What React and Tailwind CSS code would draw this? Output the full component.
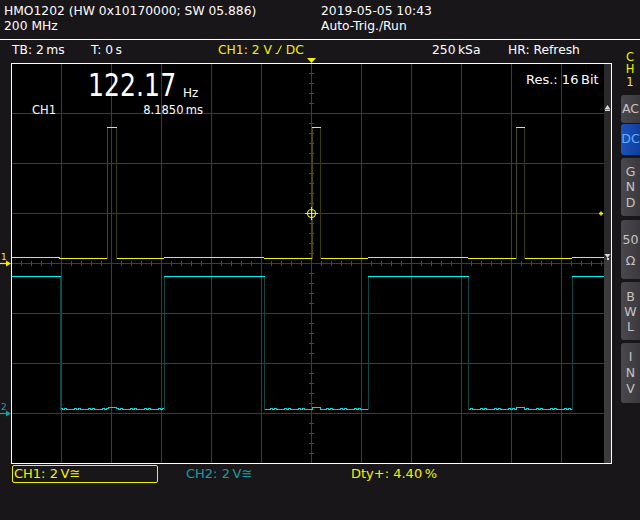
import React from "react";

const YEL = "#f2f200";
const GRID = "#3c3c3c";
const TICK = "#4a4a4a";

function lowPath(a, b, p0, p1) {
  let d = `M${a} 346.5`;
  for (let x = a; x < b; x += 2) {
    let y = 346.5;
    if (x >= p0 && x < p1) y = 344.5;
    else if ((x * 37) % 7 < 2) y = 345.5;
    d += ` L${x} ${y} L${x + 2} ${y}`;
  }
  return d;
}

function Screen() {
  const v = [];
  for (let k = 1; k < 12; k++)
    v.push(<line key={"v" + k} x1={50 * k + 0.5} y1={0} x2={50 * k + 0.5} y2={401} stroke={GRID} />);
  const h = [];
  for (let k = 1; k < 8; k++)
    h.push(<line key={"h" + k} x1={0} y1={50 * k + 0.5} x2={601} y2={50 * k + 0.5} stroke={GRID} />);
  const ticks = [];
  for (let k = 1; k < 40; k++)
    if (k % 5)
      ticks.push(<line key={"tv" + k} x1={298} x2={303} y1={10 * k + 0.5} y2={10 * k + 0.5} stroke={TICK} />);
  for (let k = 1; k < 60; k++)
    if (k % 5)
      ticks.push(<line key={"th" + k} y1={198} y2={203} x1={10 * k + 0.5} x2={10 * k + 0.5} stroke={TICK} />);

  const pulses = [[96, 105], [301, 309], [505, 513]];
  const lows = [[49, 153, 96, 105], [253, 357, 301, 309], [457, 561, 505, 513]];

  const yellow =
    "M1 194.5 H48.5 M48 195.5 H96 M105 195.5 H153 M153 194.5 H253 M253 195.5 H301 M309 195.5 H357 M357 194.5 H457 M457 195.5 H505 M513 195.5 H561 M561 194.5 H593";

  return (
    <svg width="601" height="401" viewBox="0 0 601 401" className="block" shapeRendering="crispEdges">
      <rect x="0" y="0" width="601" height="401" fill="#000" />
      {v}
      {h}
      {ticks}
      {/* CH2 trace */}
      <path d="M1 213.5 H49.5 M153 213.5 H253.5 M357 213.5 H457.5 M561 213.5 H593" stroke="#00f0f0" fill="none" />
      {lows.map(([a, b, p0, p1], i) => (
        <path key={"l" + i} d={lowPath(a, b, p0, p1)} stroke="#00d8d8" fill="none" />
      ))}
      {[49, 153, 253, 357, 457, 561].map((x) => (
        <line key={"ce" + x} x1={x + 0.5} x2={x + 0.5} y1={213.5} y2={346.5} stroke="#0b4848" />
      ))}
      {/* CH1 trace */}
      <path d={yellow} stroke="#f0f000" fill="none" />
      {pulses.map(([a, b], i) => (
        <g key={"p" + i}>
          <line x1={a + 0.5} x2={a + 0.5} y1={64.5} y2={195.5} stroke="#4a4a08" />
          <line x1={b + 0.5} x2={b + 0.5} y1={64.5} y2={195.5} stroke="#3a3a06" />
          <line x1={a} x2={b + 1} y1={64.5} y2={64.5} stroke="#f4f400" />
        </g>
      ))}
      {/* right strip */}
      <rect x="593" y="1" width="7" height="193" fill="#292929" />
      <rect x="593" y="194" width="7" height="206" fill="#3c3c3c" />
      <polygon points="596.5,42 599.5,46.5 593.5,46.5" fill="#d8d8d8" shapeRendering="auto" />
      <rect x="594" y="46.5" width="5" height="1.5" fill="#d8d8d8" />
      <polygon points="593.5,191 599.5,191 596.5,195" fill="#d8d8d8" shapeRendering="auto" />
      <rect x="595.5" y="194.5" width="2" height="2.5" fill="#d8d8d8" />
      {/* trigger crosshair */}
      <g stroke="#f0f000" fill="none" shapeRendering="auto">
        <circle cx="300.5" cy="150.5" r="4" strokeWidth="1.2" />
        <line x1="294" x2="307" y1="150.5" y2="150.5" />
        <line x1="300.5" x2="300.5" y1="144" y2="157" />
      </g>
      <g stroke="#f4f400" strokeWidth="1.6" shapeRendering="auto">
        <line x1="588" x2="592" y1="150.5" y2="150.5" />
        <line x1="590" x2="590" y1="148.5" y2="152.5" />
      </g>
      {/* border */}
      <rect x="0.5" y="0.5" width="600" height="400" stroke="#ffffff" fill="none" />
    </svg>
  );
}

function EdgeIcon() {
  return (
    <svg width="8" height="9" viewBox="0 0 8 9" className="inline-block align-baseline mx-[3px]">
      <path d="M0.5 8.5 H2.5 L6.5 0.5" stroke={YEL} strokeWidth="1.1" fill="none" />
    </svg>
  );
}

export default function App() {
  return (
    <div className="w-[640px] h-[520px] bg-[#19161a] text-white overflow-hidden font-['DejaVu_Sans',sans-serif]">
      {/* header */}
      <div className="flex pt-[4px] text-[12.3px] leading-[15px] whitespace-nowrap">
        <div className="w-[321px] pl-[4px]">
          <div>HMO1202 (HW 0x10170000; SW 05.886)</div>
          <div>200 MHz</div>
        </div>
        <div>
          <div>2019-05-05 10:43</div>
          <div>Auto-Trig./Run</div>
        </div>
      </div>
      <div className="mt-[5px] h-px bg-white" />

      <div className="flex">
        <div className="w-[620px]">
          {/* status row */}
          <div className="flex h-[23px] pt-[2.5px] pl-[12px] text-[12.3px] leading-[15px] whitespace-nowrap">
            <span className="w-[79px]">TB: 2{"\u2009"}ms</span>
            <span className="w-[127px]">T: 0{"\u2009"}s</span>
            <span className="w-[214px] text-[#f2f200]">
              CH1: 2 V<EdgeIcon />DC
            </span>
            <span className="w-[76px]">250{"\u2009"}kSa</span>
            <span>HR: Refresh</span>
          </div>

          {/* screen row */}
          <div className="flex">
            <div className="relative w-[11px] h-[401px]">
              <span className="absolute left-[1px] top-[190px] text-[9px] leading-none text-[#f2f200]">1</span>
              <svg className="absolute left-0 top-[197px]" width="11" height="7" viewBox="0 0 11 7">
                <line x1="0" x2="7" y1="3.5" y2="3.5" stroke={YEL} strokeWidth="1.2" />
                <polygon points="6,0.5 11,3.5 6,6.5" fill={YEL} />
              </svg>
              <span className="absolute left-[1px] top-[340px] text-[9px] leading-none text-[#14a0a4]">2</span>
              <svg className="absolute left-0 top-[347px]" width="11" height="7" viewBox="0 0 11 7">
                <line x1="0" x2="7" y1="3.5" y2="3.5" stroke="#14a0a4" strokeWidth="1.2" />
                <polygon points="6,0.5 11,3.5 6,6.5" fill="#14a0a4" />
              </svg>
            </div>
            <div className="relative w-[601px] h-[401px]">
              <Screen />
              <svg className="absolute left-[296px] top-[-5px]" width="9" height="5" viewBox="0 0 9 5">
                <polygon points="0,0 9,0 4.5,5" fill={YEL} />
              </svg>
              <span className="absolute left-[77px] top-[7px] text-[31.5px] leading-none origin-left scale-x-[0.8] whitespace-nowrap">
                122.17
              </span>
              <span className="absolute left-[172px] top-[24px] text-[12px] leading-none">Hz</span>
              <span className="absolute left-[21px] top-[42px] text-[11.5px] leading-none">CH1</span>
              <span className="absolute right-[409px] top-[42px] text-[11.5px] leading-none whitespace-nowrap">
                8.1850{"\u2009"}ms
              </span>
              <span className="absolute left-[515px] top-[9.5px] text-[13px] leading-none whitespace-nowrap">
                Res.: 16{"\u2009"}Bit
              </span>
            </div>
          </div>

          {/* bottom row */}
          <div className="flex mt-[1px] h-[18px] text-[13px] leading-[16px] whitespace-nowrap">
            <div className="ml-[12px] w-[146px] h-[18px] border border-[#f2f200] rounded-[2px] text-[#f2f200] pl-[1px]">
              CH1: 2{"\u2009"}V≅
            </div>
            <div className="ml-[28px] w-[165px] pt-[1px] text-[#14a0a4]">CH2: 2{"\u2009"}V≅</div>
            <div className="pt-[1px] text-[#f2f200]">Dty+: 4.40{"\u2009"}%</div>
          </div>
        </div>

        {/* right panel */}
        <div className="w-[20px] flex flex-col">
          <div className="h-[55px] pt-[10.7px] flex flex-col items-center text-[11.5px] leading-[12.7px] text-[#f2f200]">
            <span>C</span>
            <span>H</span>
            <span>1</span>
          </div>
          <div className="ml-[1px] w-[22px] h-[28px] pr-[3px] rounded-l-[3px] bg-linear-to-r from-[#4b484d] to-[#3a373c] flex items-center justify-center text-[12.5px] text-[#c4c4c4]">
            AC
          </div>
          <div className="ml-[1px] mt-[1px] w-[22px] h-[31px] pr-[3px] rounded-l-[3px] bg-linear-to-r from-[#1d52bb] to-[#0d3b9a] flex items-center justify-center text-[12.5px] text-[#66adff]">
            DC
          </div>
          <div className="ml-[1px] mt-[3px] w-[22px] h-[58px] pr-[3px] rounded-l-[3px] bg-linear-to-r from-[#4b484d] to-[#3a373c] flex flex-col items-center justify-center text-[12.5px] leading-[15.5px] text-[#c4c4c4]">
            <span>G</span>
            <span>N</span>
            <span>D</span>
          </div>
          <div className="ml-[1px] mt-[4px] w-[22px] h-[59px] pr-[3px] rounded-l-[3px] bg-linear-to-r from-[#4b484d] to-[#3a373c] flex flex-col items-center justify-center text-[12.5px] leading-[21px] text-[#c4c4c4]">
            <span>50</span>
            <span>Ω</span>
          </div>
          <div className="ml-[1px] mt-[3px] w-[22px] h-[58px] pr-[3px] rounded-l-[3px] bg-linear-to-r from-[#4b484d] to-[#3a373c] flex flex-col items-center justify-center text-[12.5px] leading-[15px] text-[#c4c4c4]">
            <span>B</span>
            <span>W</span>
            <span>L</span>
          </div>
          <div className="ml-[1px] mt-[3px] w-[22px] h-[60px] pr-[3px] rounded-l-[3px] bg-linear-to-r from-[#4b484d] to-[#3a373c] flex flex-col items-center justify-center text-[12.5px] leading-[16px] text-[#c4c4c4]">
            <span>I</span>
            <span>N</span>
            <span>V</span>
          </div>
        </div>
      </div>
    </div>
  );
}
